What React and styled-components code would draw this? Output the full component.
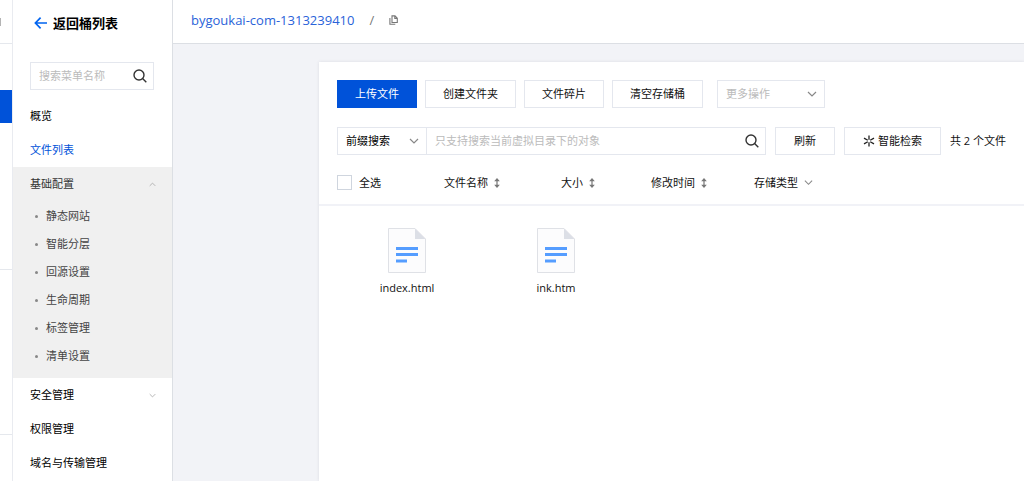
import React, {useState} from 'react';
import styled, {createGlobalStyle} from 'styled-components';

const GlobalStyle = createGlobalStyle`
    * {
        box-sizing: border-box;
    }

    body {
        margin: 0;
        font-family: "Open Sans", "Noto Sans CJK SC", sans-serif;
        font-size: 11px;
        line-height: 16px;
        color: #111;
        background: #f2f3f7;
    }

    button, input, select {
        font: inherit;
        color: inherit;
    }

    a {
        color: inherit;
        text-decoration: none;
    }

    ul {
        margin: 0;
        padding: 0;
        list-style: none;
    }
`;

const Page = styled.div`
    display: flex;
    height: 100vh;
    overflow: hidden;
`;

const Rail = styled.div`
    display: flex;
    flex-direction: column;
    flex: none;
    width: 12px;
    background: #fff;
`;

const RailTop = styled.div`
    display: flex;
    align-items: center;
    height: 44px;
    border-bottom: 1px solid #e5e8ed;
    &::before {
        content: '';
        width: 1px;
        height: 8px;
        background: #b4b4b4;
    }
`;

const RailActive = styled.div`
    height: 33px;
    margin-top: 46px;
    background: #0052d9;
`;

const RailGroup = styled.div`
    height: ${props => props.$height}px;
    border-bottom: 1px solid #e5e8ed;
`;

const Sidebar = styled.nav`
    flex: none;
    width: 161px;
    background: #fff;
    border-left: 1px solid #e9ebf0;
    border-right: 1px solid #dcdfe4;
`;

const BackLink = styled.a`
    display: flex;
    align-items: center;
    gap: 5px;
    height: 46px;
    padding-left: 21px;
    font-size: 13px;
    font-weight: bold;
    color: #000;
`;

const SearchBox = styled.label`
    display: flex;
    align-items: center;
    flex: 1;
    min-width: 0;
    height: 28px;
    padding: 0 6px 0 8px;
    background: #fff;
    border: 1px solid #e4e7ee;
    border-left-width: ${props => (props.$joined ? 0 : 1)}px;
    input {
        flex: 1;
        min-width: 0;
        padding: 0;
        border: 0;
        outline: 0;
        background: none;
    }
    input::placeholder {
        color: #bbb;
        opacity: 1;
    }
    svg {
        flex: none;
    }
`;

const MenuSearch = styled.div`
    display: flex;
    margin: 16px 18px 9px 17px;
`;

const MenuItem = styled.a`
    display: flex;
    align-items: center;
    justify-content: space-between;
    height: 34px;
    padding: 0 16px 0 17px;
    color: ${props => (props.$active ? '#0052d9' : '#000')};
`;

const MenuGroup = styled.li`
    padding-bottom: 8px;
    background: #f0f0f0;
    ${MenuItem} {
        color: #333;
    }
    ul {
        padding-top: 1px;
    }
`;

const SubItem = styled.a`
    display: flex;
    align-items: center;
    gap: 8px;
    height: 28px;
    padding-left: 22px;
    color: #444;
    &::before {
        content: '';
        width: 3px;
        height: 3px;
        border-radius: 50%;
        background: #888;
    }
`;

const Main = styled.main`
    display: flex;
    flex-direction: column;
    flex: 1;
    min-width: 0;
`;

const Header = styled.header`
    display: flex;
    align-items: center;
    flex: none;
    gap: 15px;
    height: 44px;
    padding: 0 18px 3px;
    font-size: 13px;
    background: #fff;
    border-bottom: 1px solid #dcdfe4;
    a {
        color: #2a63d9;
    }
    span {
        color: #777;
    }
`;

const IconButton = styled.button`
    display: flex;
    padding: 0;
    border: 0;
    background: none;
    color: #777;
`;

const Card = styled.section`
    flex: 1;
    margin: 18px 0 0 146px;
    background: #fff;
    box-shadow: 0 0 3px rgba(54, 58, 80, 0.12);
`;

const Toolbar = styled.div`
    display: flex;
    align-items: center;
    gap: 8px;
    padding: 18px 18px 0;
`;

const Button = styled.button`
    display: flex;
    align-items: center;
    justify-content: center;
    flex: none;
    gap: 3px;
    height: 28px;
    padding: 0 17px;
    white-space: nowrap;
    color: ${props => (props.$primary ? '#fff' : '#111')};
    background: ${props => (props.$primary ? '#0052d9' : '#fff')};
    border: 1px solid ${props => (props.$primary ? '#0052d9' : '#e4e7ee')};
`;

const SearchBar = styled(Toolbar)`
    gap: 9px;
    padding-top: 19px;
    ${Button} {
        padding: 0 18px;
    }
`;

const SelectBox = styled.div`
    display: grid;
    flex: none;
    align-items: center;
    width: ${props => props.$width}px;
    height: 28px;
    margin-left: ${props => props.$offset || 0}px;
    border: 1px solid #e4e7ee;
    color: ${props => (props.$muted ? '#bbb' : '#000')};
    select {
        grid-area: 1 / 1;
        height: 26px;
        padding: 0 24px 0 8px;
        border: 0;
        outline: 0;
        appearance: none;
        background: none;
    }
    svg {
        grid-area: 1 / 1;
        justify-self: end;
        margin-right: 7px;
        pointer-events: none;
    }
`;

const SearchGroup = styled.div`
    display: flex;
    flex: 1;
    min-width: 0;
`;

const ListHead = styled.div`
    display: grid;
    grid-template-columns: 107px 117px 90px 103px auto;
    align-items: center;
    height: 51px;
    padding: 6px 18px 0;
    border-bottom: 2px solid #f1f2f7;
`;

const CheckAll = styled.label`
    display: flex;
    align-items: center;
    gap: 7px;
    input {
        width: 15px;
        height: 15px;
        margin: 0;
        appearance: none;
        background: #fff;
        border: 1px solid #cfd5de;
    }
    input:checked {
        background: #0052d9;
    }
`;

const HeadButton = styled.button`
    display: flex;
    align-items: center;
    gap: 6px;
    padding: 0;
    border: 0;
    background: none;
`;

const Files = styled.ul`
    display: flex;
    flex-wrap: wrap;
    gap: 9px;
    padding: 22px 18px;
`;

const File = styled.li`
    display: flex;
    flex-direction: column;
    align-items: center;
    gap: 7px;
    width: 140px;
`;

const Chevron = ({size = 10, up, color = '#888'}) => (
    <svg width={size} height={size} viewBox="0 0 10 10" fill="none" stroke={color} strokeWidth="1.2">
        <path d={up ? 'M1 7l4-4 4 4' : 'M1 3l4 4 4-4'} />
    </svg>
);

const SearchIcon = () => (
    <svg width="14" height="14" viewBox="0 0 14 14" fill="none" stroke="#333" strokeWidth="1.4">
        <circle cx="6" cy="6" r="5" />
        <path d="M9.6 9.6l3.7 3.7" />
    </svg>
);

const BackIcon = () => (
    <svg width="14" height="12" viewBox="0 0 14 12" fill="none" stroke="#0064f0" strokeWidth="1.7">
        <path d="M6.6 0.7L1.4 6l5.2 5.3M1.6 6H13" />
    </svg>
);

const CopyIcon = () => (
    <svg width="9" height="10" viewBox="0 0 9 10" fill="none" stroke="currentColor" strokeWidth="1.1">
        <path d="M3 0.9h3l2.3 2.3v4.3H3zM5.8 0.9v2.5h2.5M0.9 3v6.3h5.4" />
    </svg>
);

const SortIcon = () => (
    <svg width="6" height="10" viewBox="0 0 6 10" fill="#777">
        <path d="M3 0l2.8 3.2H3.6v3.6h2.2L3 10 0.2 6.8h2.2V3.2H0.2z" />
    </svg>
);

const SparkIcon = () => (
    <svg width="12" height="12" viewBox="0 0 12 12" fill="none" stroke="#222" strokeWidth="1.3">
        <path d="M6 0.4v4.3M6 7.3v4.3M1 3.1l3.8 2.2M7.2 6.7L11 8.9M11 3.1L7.2 5.3M4.8 6.7L1 8.9" />
    </svg>
);

const FileIcon = () => (
    <svg width="38" height="45" viewBox="0 0 38 45">
        <path d="M0.5 0.5H27L37.5 11v33.5H0.5z" fill="#fcfcfd" stroke="#dfe1e6" />
        <path d="M27 0.5L37.5 11H27z" fill="#dcdfe6" />
        <path d="M8 19h22v3H8zM8 25h22v3H8zM8 31.5h11v3H8z" fill="#559dff" />
    </svg>
);

const subItems = ['静态网站', '智能分层', '回源设置', '生命周期', '标签管理', '清单设置'];
const sorts = ['文件名称', '大小', '修改时间'];
const files = ['index.html', 'ink.htm'];

const renderSidebar = () => (
    <Sidebar>
        <BackLink href="#buckets"><BackIcon />返回桶列表</BackLink>
        <MenuSearch>
            <SearchBox>
                <input type="text" placeholder="搜索菜单名称" aria-label="搜索菜单名称" />
                <SearchIcon />
            </SearchBox>
        </MenuSearch>
        <ul>
            <li><MenuItem href="#overview">概览</MenuItem></li>
            <li><MenuItem href="#files" $active>文件列表</MenuItem></li>
            <MenuGroup>
                <MenuItem href="#basic">基础配置<Chevron size={7} up color="#aaa" /></MenuItem>
                <ul>
                    {subItems.map(item => (
                        <li key={item}><SubItem href="#basic">{item}</SubItem></li>
                    ))}
                </ul>
            </MenuGroup>
            <li><MenuItem href="#security">安全管理<Chevron size={7} color="#aaa" /></MenuItem></li>
            <li><MenuItem href="#access">权限管理</MenuItem></li>
            <li><MenuItem href="#domain">域名与传输管理</MenuItem></li>
        </ul>
    </Sidebar>
);

export default function App() {
    const [all, setAll] = useState(false);

    return (
        <Page>
            <GlobalStyle />
            <Rail>
                <RailTop />
                <RailActive />
                <RailGroup $height={147} />
                <RailGroup $height={165} />
            </Rail>
            {renderSidebar()}
            <Main>
                <Header>
                    <a href="#bucket">bygoukai-com-1313239410</a>
                    <span>/</span>
                    <IconButton type="button" aria-label="复制"><CopyIcon /></IconButton>
                </Header>
                <Card>
                    <Toolbar>
                        <Button type="button" $primary>上传文件</Button>
                        <Button type="button">创建文件夹</Button>
                        <Button type="button">文件碎片</Button>
                        <Button type="button">清空存储桶</Button>
                        <SelectBox $width={108} $offset={6} $muted>
                            <select aria-label="更多操作">
                                <option>更多操作</option>
                            </select>
                            <Chevron />
                        </SelectBox>
                    </Toolbar>
                    <SearchBar>
                        <SearchGroup>
                            <SelectBox $width={90}>
                                <select aria-label="前缀搜索">
                                    <option>前缀搜索</option>
                                </select>
                                <Chevron />
                            </SelectBox>
                            <SearchBox $joined>
                                <input
                                    type="text"
                                    placeholder="只支持搜索当前虚拟目录下的对象"
                                    aria-label="只支持搜索当前虚拟目录下的对象"
                                />
                                <SearchIcon />
                            </SearchBox>
                        </SearchGroup>
                        <Button type="button">刷新</Button>
                        <Button type="button"><SparkIcon />智能检索</Button>
                        <span>共 2 个文件</span>
                    </SearchBar>
                    <ListHead>
                        <CheckAll>
                            <input type="checkbox" checked={all} onChange={e => setAll(e.target.checked)} />
                            全选
                        </CheckAll>
                        {sorts.map(name => (
                            <HeadButton type="button" key={name}>{name}<SortIcon /></HeadButton>
                        ))}
                        <HeadButton type="button">存储类型<Chevron size={9} /></HeadButton>
                    </ListHead>
                    <Files>
                        {files.map(name => (
                            <File key={name}><FileIcon />{name}</File>
                        ))}
                    </Files>
                </Card>
            </Main>
        </Page>
    );
}
